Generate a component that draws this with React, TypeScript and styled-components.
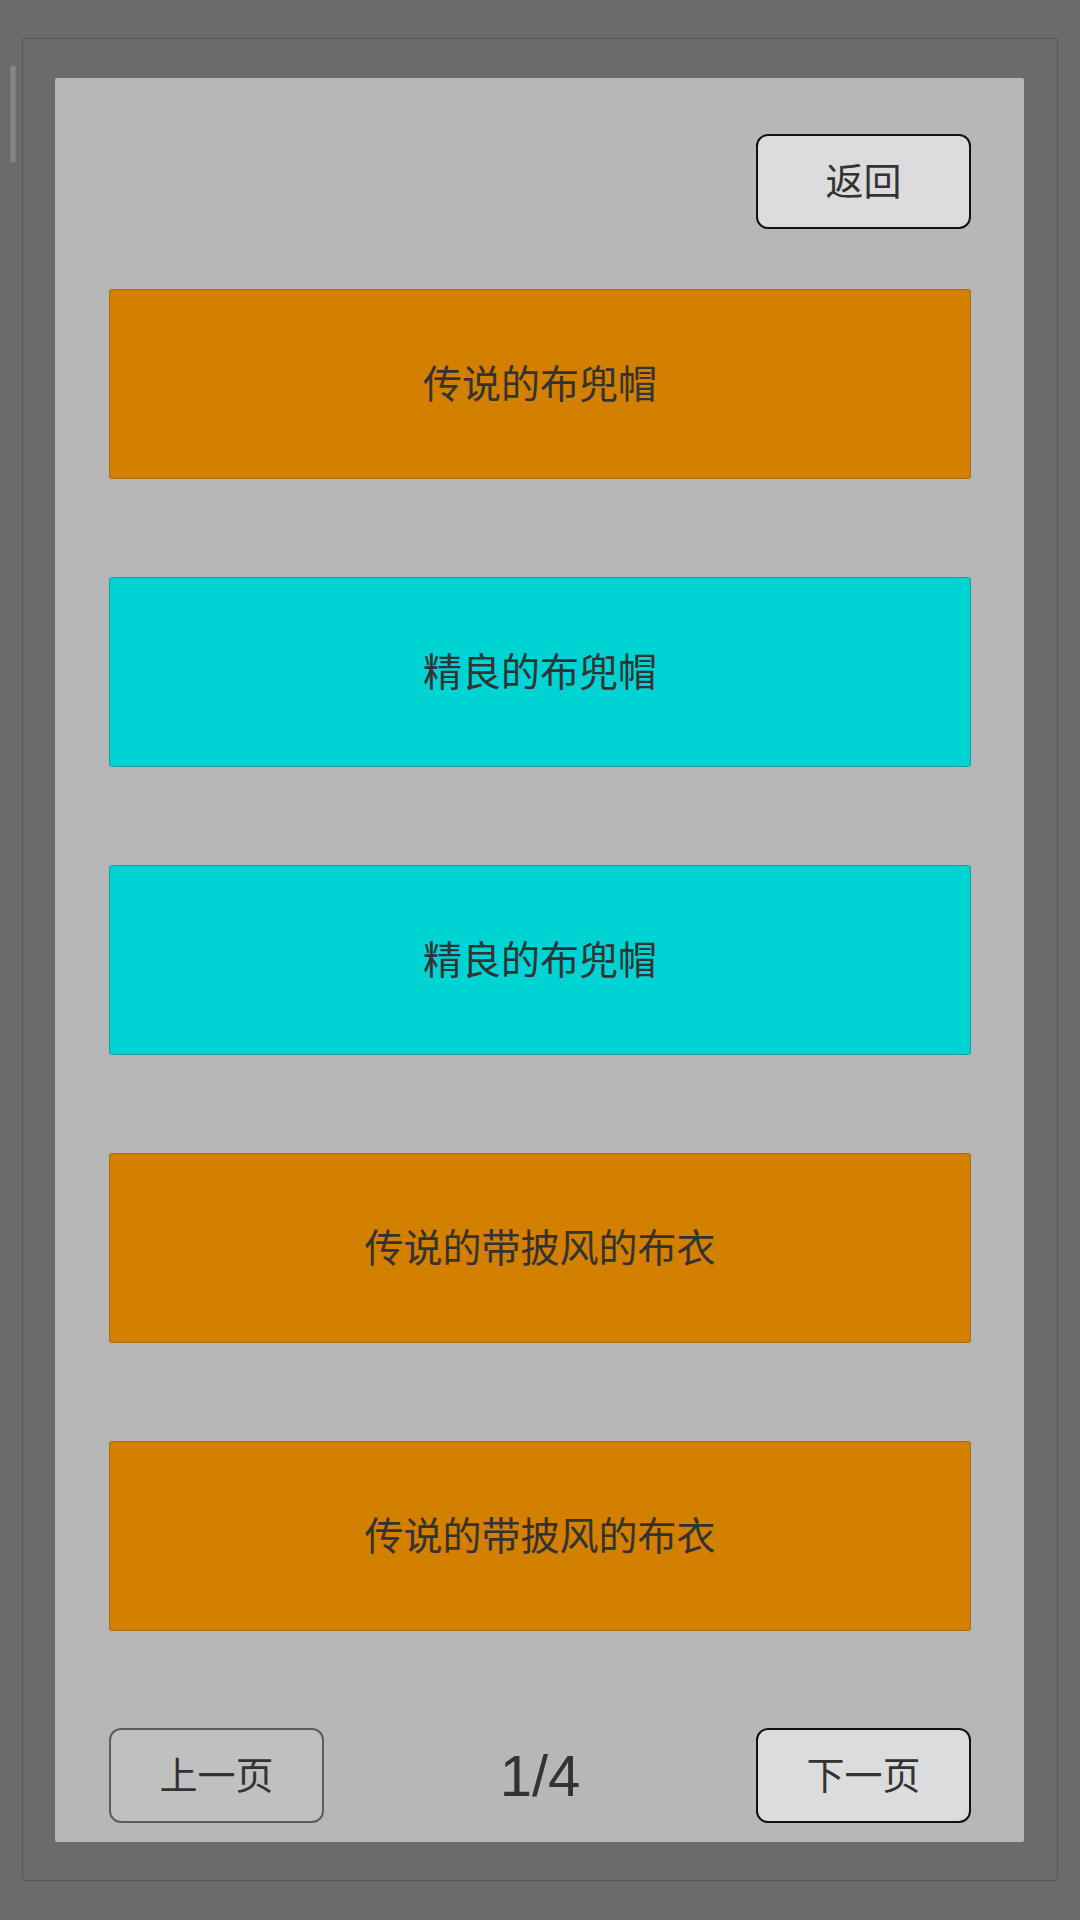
import React from "react";
import styled, { createGlobalStyle } from "styled-components";

const GlobalStyle = createGlobalStyle`
  html, body {
    margin: 0;
    padding: 0;
    background: #6b6b6b;
  }
  body {
    font-family: "Noto Sans CJK SC", "Noto Sans", sans-serif;
  }
  * { box-sizing: border-box; }
`;

const Screen = styled.div`
  position: relative;
  width: 1080px;
  height: 1920px;
  padding: 38px 0 0 22px;
  background: #6b6b6b;
`;

const ScrollThumb = styled.div`
  position: absolute;
  left: 10px;
  top: 65px;
  width: 6px;
  height: 98px;
  border-radius: 3px;
  background: #858585;
  border: 1px solid #7a7a7a;
`;

const Frame = styled.div`
  width: 1036px;
  height: 1843px;
  border: 1px solid #585858;
  border-radius: 2px;
  padding: 39px 0 0 32px;
`;

const Panel = styled.div`
  width: 969px;
  height: 1764px;
  background: #b7b7b7;
  border-radius: 2px;
  display: flex;
  flex-direction: column;
  padding: 56px 53px 19px 54px;
`;

const HeaderRow = styled.div`
  display: flex;
  justify-content: flex-end;
`;

const PillButton = styled.button<{ $muted?: boolean }>`
  width: 215px;
  height: 95px;
  border-radius: 12px;
  border: 2px solid ${(p) => (p.$muted ? "#5c5c5c" : "#111111")};
  background: ${(p) => (p.$muted ? "#c0c0c0" : "#dcdcdc")};
  color: #333333;
  font-family: "Noto Sans CJK SC", "Noto Sans", sans-serif;
  font-size: 38px;
  line-height: 1;
  padding: 0 0 6px 0;
  display: flex;
  align-items: center;
  justify-content: center;
`;

const List = styled.div`
  margin-top: 60px;
  display: flex;
  flex-direction: column;
  gap: 98px;
`;

const ItemCard = styled.div<{ $tier: "legend" | "fine" }>`
  height: 190px;
  border-radius: 3px;
  background: ${(p) => (p.$tier === "legend" ? "#d37f00" : "#00d3d3")};
  border: 1px solid ${(p) => (p.$tier === "legend" ? "#a86a10" : "#1a9fa0")};
  display: flex;
  align-items: center;
  justify-content: center;
  padding-bottom: 6px;
  color: #333333;
  font-size: 39px;
  line-height: 1;
  font-family: "Noto Sans CJK SC", "Noto Sans", sans-serif;
`;

const Footer = styled.div`
  margin-top: 97px;
  display: flex;
  align-items: center;
  justify-content: space-between;
`;

const PageIndicator = styled.div`
  font-family: "Liberation Sans", Arial, sans-serif;
  font-size: 58px;
  color: #333333;
  line-height: 1;
`;

const items: { name: string; tier: "legend" | "fine" }[] = [
  { name: "传说的布兜帽", tier: "legend" },
  { name: "精良的布兜帽", tier: "fine" },
  { name: "精良的布兜帽", tier: "fine" },
  { name: "传说的带披风的布衣", tier: "legend" },
  { name: "传说的带披风的布衣", tier: "legend" },
];

export default function App() {
  return (
    <>
      <GlobalStyle />
      <Screen>
        <ScrollThumb />
        <Frame>
          <Panel>
            <HeaderRow>
              <PillButton>返回</PillButton>
            </HeaderRow>
            <List>
              {items.map((it, i) => (
                <ItemCard key={i} $tier={it.tier}>
                  {it.name}
                </ItemCard>
              ))}
            </List>
            <Footer>
              <PillButton $muted>上一页</PillButton>
              <PageIndicator>1/4</PageIndicator>
              <PillButton>下一页</PillButton>
            </Footer>
          </Panel>
        </Frame>
      </Screen>
    </>
  );
}
